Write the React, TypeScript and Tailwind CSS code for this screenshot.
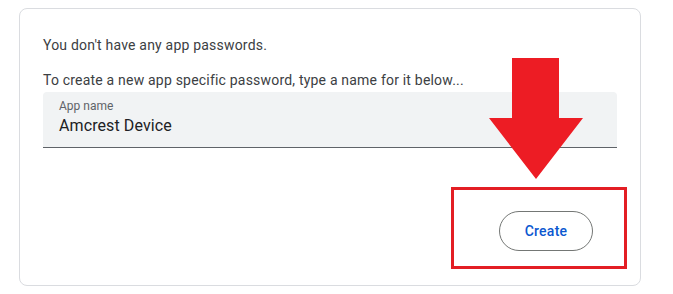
import React from "react";

export default function App() {
  return (
    <div className="relative w-[673px] h-[294px] bg-white overflow-hidden" style={{ fontFamily: "Roboto, 'Liberation Sans', sans-serif" }}>
      <div className="absolute left-[19px] top-[8px] w-[622px] h-[278px] rounded-[8px] border border-[#dadce0] bg-white">
        <div className="pl-[23px] pr-[23px] pt-[26px] flex flex-col">
          <p className="text-[14px] leading-[20px] tracking-[0.2px] text-[#3c4043]">You don't have any app passwords.</p>
          <p className="mt-[15px] text-[14px] leading-[20px] tracking-[0.2px] text-[#3c4043]">To create a new app specific password, type a name for it below...</p>
          <div className="mt-[2px] h-[56px] bg-[#f1f3f4] border-b border-[#5f6368] rounded-t-[4px] pl-[16px] pt-[6px] flex flex-col">
            <span className="text-[12px] leading-[16px] text-[#5f6368]">App name</span>
            <span className="text-[16px] leading-[24px] tracking-[0.1px] text-[#202124]">Amcrest Device</span>
          </div>
          <div className="mt-[63px] flex justify-end pr-[24px]">
            <button className="w-[94px] h-[40px] rounded-full border border-[#747775] text-[14px] font-medium text-[#0b57d0] tracking-[0.25px]">Create</button>
          </div>
        </div>
      </div>
      <svg className="absolute left-0 top-0" width="673" height="294">
        <polygon points="512,58 559,58 559,118 583,118 536,179 489,118 512,118" fill="#ed1c24" />
      </svg>
      <div className="absolute left-[451px] top-[187px] w-[176px] h-[82px] border-[3px] border-[#e31e24]" />
    </div>
  );
}
